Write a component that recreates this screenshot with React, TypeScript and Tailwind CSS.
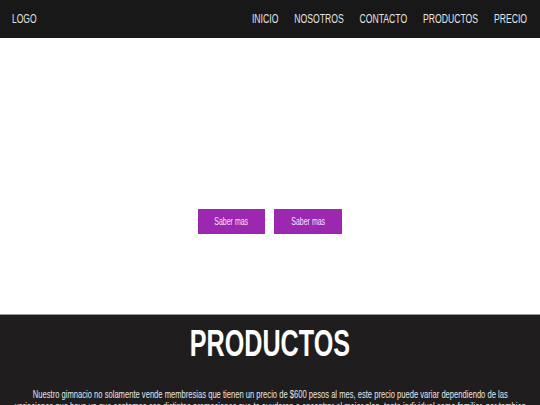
const links = ['INICIO', 'NOSOTROS', 'CONTACTO', 'PRODUCTOS', 'PRECIO'];

export default function App() {
  return (
    <div className="min-h-screen overflow-hidden bg-white font-['Liberation_Sans',Arial,sans-serif]">
      <header className="flex h-[38px] items-center justify-between bg-[#181818] pl-[12px] pr-[13px] text-[12px] text-[#e4e4e4]">
        <span className="inline-block origin-left scale-x-[0.71]">LOGO</span>
        <nav className="flex origin-right scale-x-[0.72] gap-[22px]">
          {links.map((l) => (
            <a key={l} href="#" className="hover:text-white">
              {l}
            </a>
          ))}
        </nav>
      </header>

      <section className="flex h-[276px] items-start justify-center gap-[9px] bg-white pt-[171px]">
        <button className="h-[25px] w-[67px] bg-[#9c27b0] text-[10px] text-[#f3e6f5]">
          <span className="inline-block scale-x-[0.7]">Saber mas</span>
        </button>
        <button className="h-[25px] w-[68px] bg-[#9c27b0] text-[10px] text-[#f3e6f5]">
          <span className="inline-block scale-x-[0.7]">Saber mas</span>
        </button>
      </section>

      <section className="overflow-hidden border-t border-[#9a9a9a] bg-[#1f1d1e] pb-10 text-center text-white">
        <h2 className="pt-[8px] text-[37px] font-bold leading-[42px]">
          <span className="inline-block scale-x-[0.68]">PRODUCTOS</span>
        </h2>
        <div className="mt-[24px] flex justify-center">
          <p className="shrink-0 scale-x-[0.76] whitespace-nowrap text-[10px] leading-[12px] text-[#e6e6e6]">
            Nuestro gimnacio no solamente vende membresias que tienen un precio de $600 pesos al mes, este precio puede variar dependiendo de las
            <br />
            variaciones que haya ya que contamos con distintas promociones que te ayudaran a encontrar el mejor plan, tanto individual como familiar, por tambien
          </p>
        </div>
      </section>
    </div>
  );
}
